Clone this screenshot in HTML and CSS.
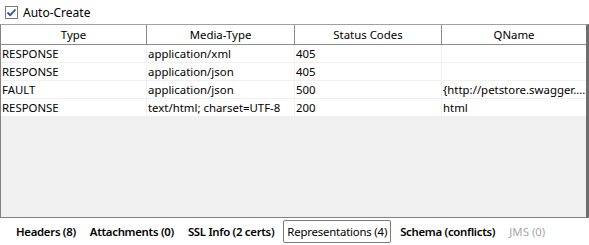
FILE: index.html
```html
<!DOCTYPE html>
<html lang="en">
<head>
  <meta charset="UTF-8">
  <title>Representations</title>
  <link rel="stylesheet" href="styles.css">
</head>
<body>

  <label class="auto-create">
    <span class="check">
      <svg width="11" height="11" viewBox="0 0 11 11"><path d="M1.5 5.5 L4.2 8.2 L9.5 2.5" fill="none" stroke="#2b4f9e" stroke-width="1.8"/></svg>
    </span>
    <span>Auto-Create</span>
  </label>

  <div class="table-box">
    <div class="grid header">
      <div>Type</div>
      <div>Media-Type</div>
      <div>Status Codes</div>
      <div>QName</div>
    </div>
    <div class="grid row">
      <div>RESPONSE</div>
      <div>application/xml</div>
      <div>405</div>
      <div></div>
    </div>
    <div class="grid row">
      <div>RESPONSE</div>
      <div>application/json</div>
      <div>405</div>
      <div></div>
    </div>
    <div class="grid row">
      <div>FAULT</div>
      <div>application/json</div>
      <div>500</div>
      <div>{http://petstore.swagger....</div>
    </div>
    <div class="grid row">
      <div>RESPONSE</div>
      <div>text/html; charset=UTF-8</div>
      <div>200</div>
      <div>html</div>
    </div>
  </div>

  <div class="tabs">
    <span class="tab">Headers (8)</span>
    <span class="tab">Attachments (0)</span>
    <span class="tab">SSL Info (2 certs)</span>
    <span class="tab selected">Representations (4)</span>
    <span class="tab">Schema (conflicts)</span>
    <span class="tab disabled">JMS (0)</span>
  </div>

</body>
</html>
```

FILE: styles.css
```css
body {
  margin: 0;
  background: #ffffff;
  font-family: "Noto Sans", "Open Sans", Arial, sans-serif;
  font-size: 11.4px;
  color: #000000;
  width: 589px;
  height: 245px;
  overflow: hidden;
}

.auto-create {
  display: flex;
  align-items: center;
  gap: 5px;
  height: 24px;
  padding-left: 5px;
  font-size: 12px;
}

.check {
  width: 11px;
  height: 11px;
  border: 1px solid #7a7a7a;
  background: #ffffff;
  display: flex;
}

.table-box {
  height: 194px;
  box-sizing: border-box;
  border-top: 1px solid #a0a0a0;
  border-left: 1px solid #828282;
  border-right: 3px solid #6e6e6e;
  border-bottom: 1px solid #828282;
  background: #f0f0f0;
}

.grid {
  display: grid;
  grid-template-columns: 146px 148px 147px 1fr;
}

.header {
  height: 20px;
  background: #ffffff;
  border-bottom: 1px solid #8c8c8c;
  box-sizing: border-box;
}

.header div {
  text-align: center;
  line-height: 19px;
  border-right: 1px solid #8c8c8c;
}

.header div:last-child {
  border-right: none;
}

.row {
  height: 18px;
  background: #ffffff;
}

.row div {
  line-height: 17px;
  padding-left: 1px;
  border-right: 1px solid #f0f0f0;
  border-bottom: 1px solid #f0f0f0;
  white-space: nowrap;
  overflow: hidden;
}

.row div:last-child {
  border-right: none;
}

.tabs {
  display: flex;
  align-items: center;
  height: 27px;
  padding-left: 11px;
  gap: 4px;
}

.tab {
  padding: 3px 4px;
  font-weight: 600;
  letter-spacing: -0.3px;
  border: 1px solid transparent;
  border-radius: 2px;
}

.tab.selected {
  font-weight: 400;
  letter-spacing: -0.2px;
  padding: 3px 3px;
  border-color: #7a7a7a;
}

.tab.disabled {
  color: #a8a8a8;
  font-weight: 400;
  letter-spacing: 0;
}
```
